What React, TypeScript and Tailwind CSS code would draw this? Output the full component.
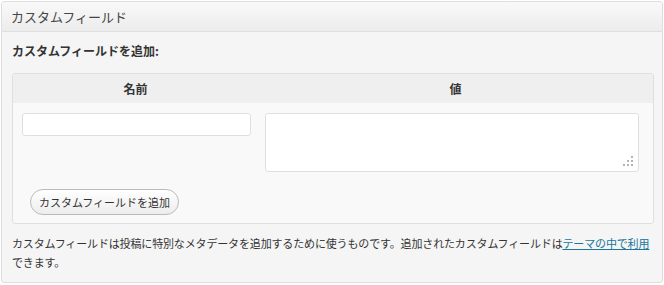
import React from "react";

export default function App() {
  const font = { fontFamily: '"Noto Sans CJK JP", "Noto Sans", sans-serif' };
  return (
    <div className="w-[664px] h-[285px] bg-white p-px" style={font}>
      <div className="w-[662px] h-[282px] border border-[#dfdfdf] rounded-[3px] bg-[#f5f5f5] flex flex-col overflow-hidden">
        <div className="h-[30px] shrink-0 border-b border-[#dfdfdf] bg-gradient-to-b from-[#f9f9f9] to-[#ececec] flex items-center pl-[9px] text-[13px] text-[#464646]">
          カスタムフィールド
        </div>
        <div className="px-[10px] pt-[11px]">
          <div className="text-[12px] font-bold text-[#333] leading-[16px]">カスタムフィールドを追加:</div>
          <div className="mt-[14px] w-[642px] h-[151px] border border-[#dfdfdf] rounded-[3px] bg-[#f9f9f9] flex flex-col">
            <div className="h-[29px] bg-[#efefef] grid grid-cols-[245px_1fr] items-center text-[12px] font-bold text-[#333]">
              <div className="text-center">名前</div>
              <div className="text-center">値</div>
            </div>
            <div className="grid grid-cols-[245px_1fr] pt-[10px]">
              <div className="pl-[9px]">
                <div className="w-[229px] h-[23px] bg-white border border-[#dfdfdf] rounded-[3px]" />
              </div>
              <div className="pl-[7px]">
                <div className="relative w-[374px] h-[59px] bg-white border border-[#dfdfdf] rounded-[3px]">
                  <svg className="absolute right-[5px] bottom-[5px]" width="10" height="10" viewBox="0 0 10 10">
                    <rect x="8" y="0" width="2" height="2" fill="#b4b4b4" />
                    <rect x="4" y="4" width="2" height="2" fill="#b4b4b4" />
                    <rect x="8" y="4" width="2" height="2" fill="#b4b4b4" />
                    <rect x="0" y="8" width="2" height="2" fill="#b4b4b4" />
                    <rect x="4" y="8" width="2" height="2" fill="#b4b4b4" />
                    <rect x="8" y="8" width="2" height="2" fill="#b4b4b4" />
                  </svg>
                </div>
              </div>
            </div>
            <div className="pl-[17px] pt-[17px]">
              <div className="w-[149px] h-[26px] rounded-full border border-[#bbbbbb] bg-gradient-to-b from-white to-[#ededed] flex items-center justify-center text-[11px] text-[#333]">
                カスタムフィールドを追加
              </div>
            </div>
          </div>
          <p className="mt-[10px] text-[11px] leading-[19px] tracking-[-0.15px] text-[#333]">
            カスタムフィールドは投稿に特別なメタデータを追加するために使うものです。追加されたカスタムフィールドは
            <a className="text-[#21759b] underline">テーマの中で利用</a>
            できます。
          </p>
        </div>
      </div>
    </div>
  );
}
